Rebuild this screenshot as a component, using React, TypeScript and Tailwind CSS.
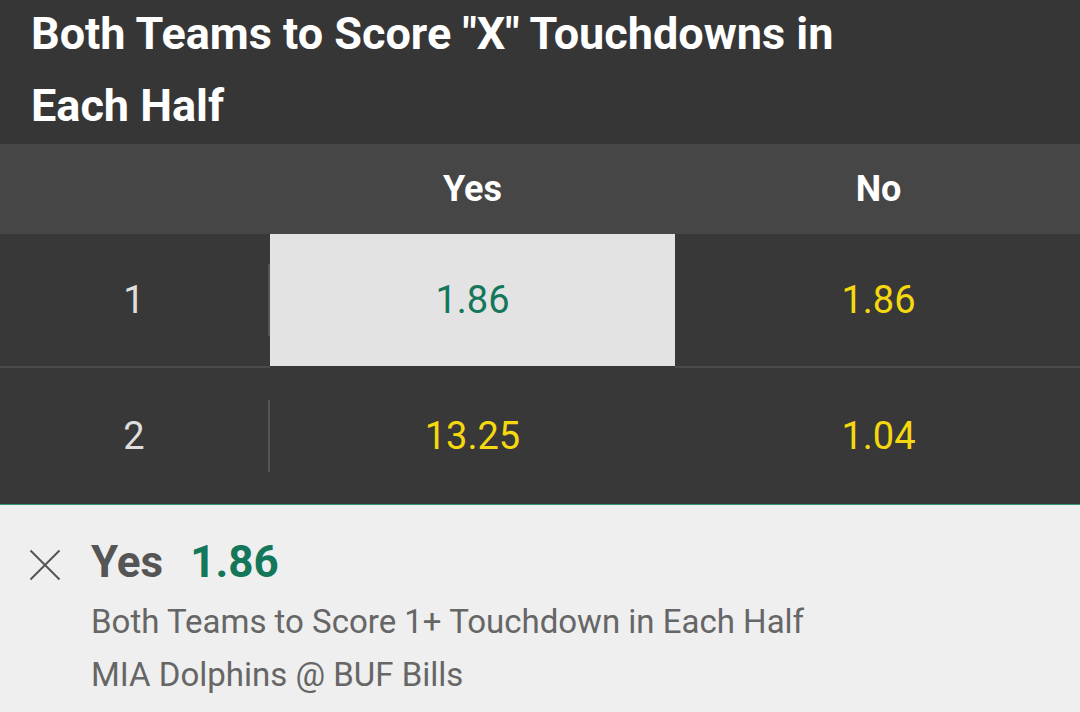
const rows = [
  { label: '1', yes: '1.86', no: '1.86', selected: true, height: 'h-[134px]', last: false },
  { label: '2', yes: '13.25', no: '1.04', selected: false, height: 'h-[136px]', last: true },
];

export default function App() {
  return (
    <div className="w-[1080px] h-[712px] overflow-hidden bg-[#383838] font-['Roboto','Liberation_Sans',sans-serif]">
      {/* Market title */}
      <div className="h-[144px] bg-[#363636] px-[31px] overflow-hidden">
        <h1 className="-mt-[2px] text-[45px] leading-[72px] font-bold text-white">
          Both Teams to Score "X" Touchdowns in
          <br />
          Each Half
        </h1>
      </div>

      {/* Column header */}
      <div className="grid grid-cols-[270px_1fr_1fr] h-[90px] bg-[#464646] items-center">
        <div />
        <div className="text-center text-[36px] font-bold text-white">Yes</div>
        <div className="text-center text-[36px] font-bold text-white ml-[2px]">No</div>
      </div>

      {/* Odds rows */}
      {rows.map((row) => {
        const sep = row.last ? '' : 'border-b-2 border-[#4a4a4a]';
        return (
          <div key={row.label} className={`grid grid-cols-[270px_1fr_1fr] ${row.height}`}>
            <div className={`flex items-center ${sep}`}>
              <div className="flex-1 text-center text-[38px] text-[#dedede]">{row.label}</div>
              <div className="w-[2px] h-[72px] bg-[#555555]" />
            </div>
            <div
              className={`flex items-center justify-center text-[38px] ${
                row.selected
                  ? 'bg-[#e3e3e3] text-[#14775a] bg-clip-padding border-b-2 border-[#383838]'
                  : `text-[#f6d80e] ${sep}`
              }`}
            >
              {row.yes}
            </div>
            <div className={`flex items-center justify-center text-[38px] text-[#f6d80e] pl-[2px] ${sep}`}>
              {row.no}
            </div>
          </div>
        );
      })}

      {/* Bet slip selection */}
      <div className="h-[208px] bg-[#efefef] border-t border-[#2f9a78] flex">
        <div className="w-[91px] pt-[44px] pl-[29px]">
          <svg width="32" height="32" viewBox="0 0 32 32" className="text-[#555555]">
            <path d="M1.5 1.5 L30.5 30.5 M30.5 1.5 L1.5 30.5" stroke="currentColor" strokeWidth="2" fill="none" />
          </svg>
        </div>
        <div className="flex-1 pt-[33px]">
          <div className="flex items-baseline gap-[27px] leading-[48px]">
            <span className="text-[44px] font-bold text-[#555555]">Yes</span>
            <span className="text-[44px] font-bold text-[#14775a]">1.86</span>
          </div>
          <div className="mt-[9px] text-[33px] leading-[53px] text-[#666666]">
            <div>Both Teams to Score 1+ Touchdown in Each Half</div>
            <div>MIA Dolphins @ BUF Bills</div>
          </div>
        </div>
      </div>
    </div>
  );
}
